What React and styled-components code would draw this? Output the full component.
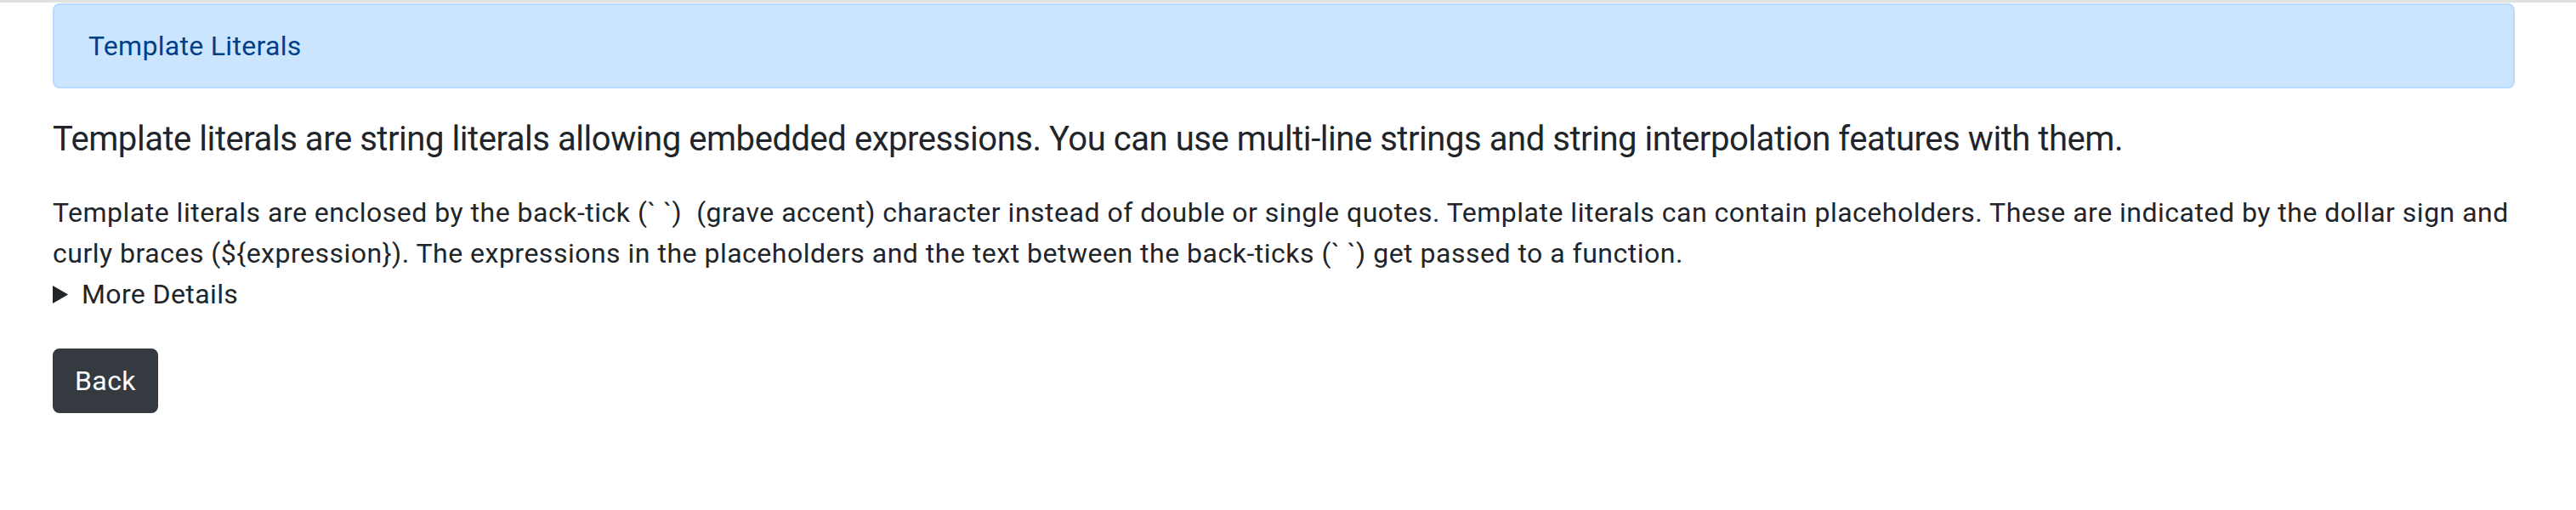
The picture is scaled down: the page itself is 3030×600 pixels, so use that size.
import React from "react";
import styled, { createGlobalStyle } from "styled-components";

const GlobalStyle = createGlobalStyle`
  html, body {
    margin: 0;
    padding: 0;
    background: #fff;
  }
  body {
    font-family: Roboto, "Liberation Sans", sans-serif;
    color: #212529;
  }
`;

const Page = styled.div`
  border-top: 3px solid #e0e0e0;
  padding: 0 72px 0 62px;
`;

const Alert = styled.div`
  margin-top: 1px;
  margin-bottom: 30px;
  padding: 24px 40px;
  border: 2px solid #b8daff;
  border-radius: 8px;
  background-color: #cce5ff;
  color: #004085;
  font-size: 32px;
  line-height: 48px;
  letter-spacing: 0.3px;
`;

const Lead = styled.p`
  margin: 0 0 32px 0;
  font-size: 40px;
  line-height: 60px;
  font-weight: 400;
  letter-spacing: -0.45px;
`;

const Text = styled.p`
  margin: 0;
  font-size: 32px;
  line-height: 48px;
  letter-spacing: 0.5px;
`;

const Details = styled.details`
  font-size: 32px;
  line-height: 48px;
  letter-spacing: 0.4px;

  summary {
    cursor: pointer;
  }
`;

const Button = styled.button`
  display: inline-block;
  margin-top: 40px;
  padding: 12px 24px;
  border: 2px solid #343a40;
  border-radius: 8px;
  background-color: #343a40;
  color: #fff;
  font-family: inherit;
  font-size: 32px;
  line-height: 48px;
  letter-spacing: 0.4px;
  cursor: pointer;
`;

const App = () => {
  return (
    <>
      <GlobalStyle />
      <Page>
        <Alert>Template Literals</Alert>
        <Lead>
          Template literals are string literals allowing embedded expressions.
          You can use multi-line strings and string interpolation features with
          them.
        </Lead>
        <Text>
          Template literals are enclosed by the back-tick (` `)&nbsp; (grave
          accent) character instead of double or single quotes. Template
          literals can contain placeholders. These are indicated by the dollar
          sign and curly braces ($&#123;expression&#125;). The expressions in
          the placeholders and the text between the back-ticks (` `) get passed
          to a function.
        </Text>
        <Details>
          <summary>More Details</summary>
        </Details>
        <Button>Back</Button>
      </Page>
    </>
  );
};

export default App;
